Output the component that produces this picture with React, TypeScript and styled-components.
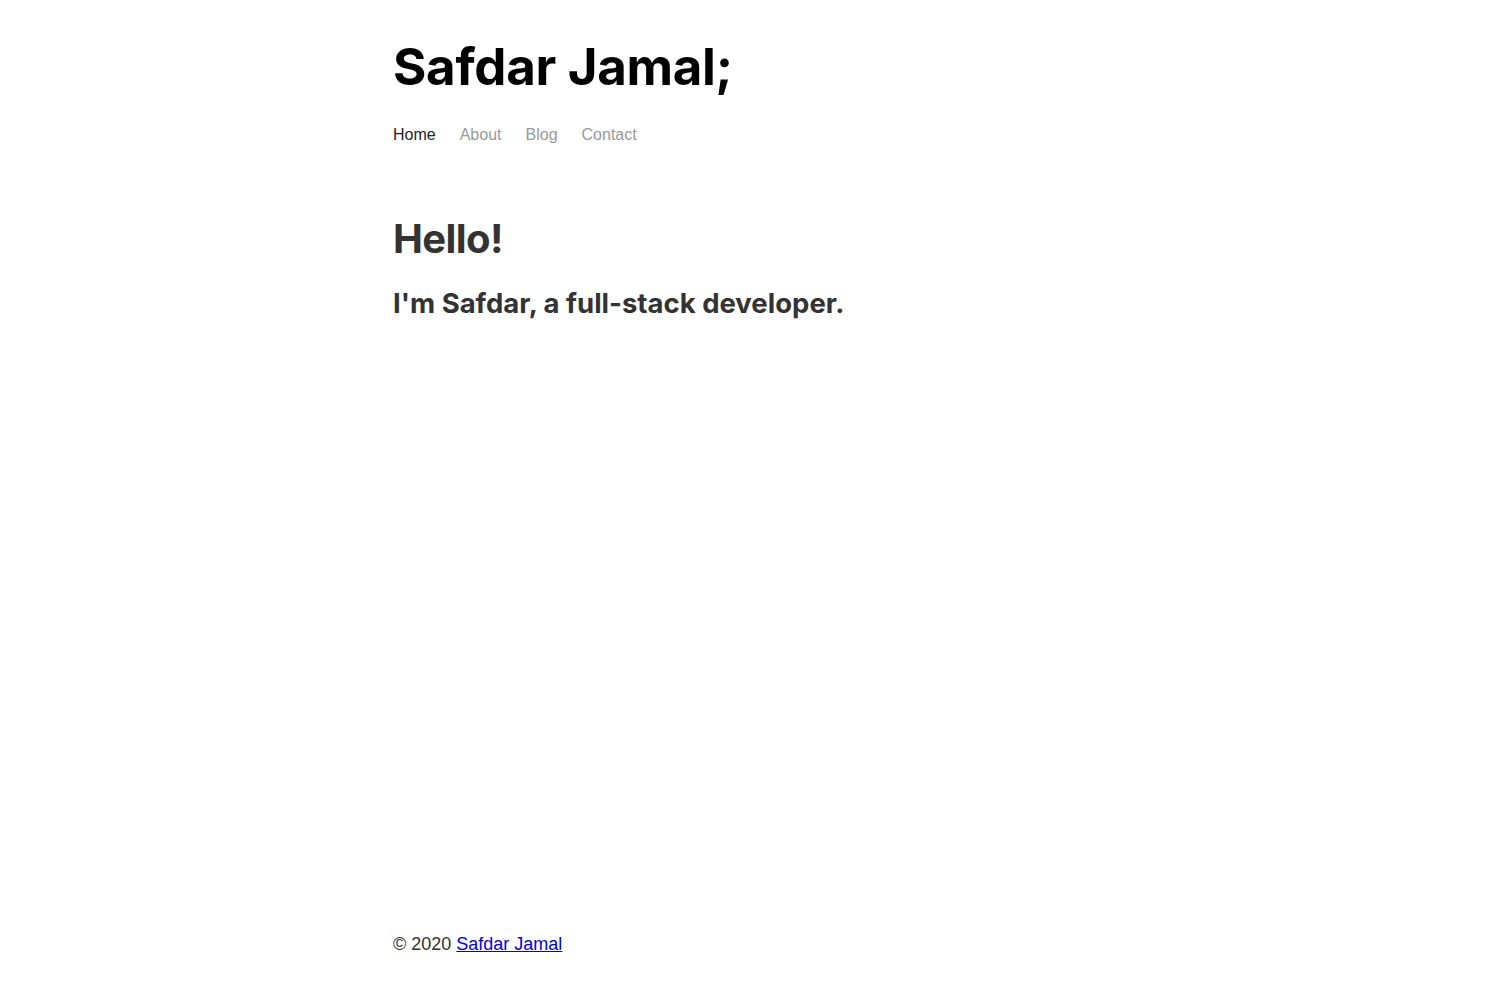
import React from "react";
import styled, { createGlobalStyle } from "styled-components";

const GlobalStyle = createGlobalStyle`
    html, body {
        margin: 0;
        padding: 0;
        background: #fff;
    }
    body {
        font-family: "Liberation Sans", Arial, sans-serif;
        color: #333;
    }
`;

const Page = styled.div`
    display: flex;
    flex-direction: column;
    min-height: 100vh;
    width: 714px;
    margin: 0 auto;
`;

const Header = styled.header`
    padding-top: 37px;
`;

const Title = styled.h1`
    margin: 0;
    font-family: Inter, "Noto Sans", sans-serif;
    font-size: 51px;
    font-weight: 700;
    line-height: 60px;
    color: #000;
    letter-spacing: -0.3px;
`;

const Nav = styled.nav`
    display: flex;
    gap: 24px;
    margin-top: 28px;
`;

const NavLink = styled.a<{ $active?: boolean }>`
    font-size: 16px;
    line-height: 20px;
    text-decoration: none;
    color: ${(p) => (p.$active ? "#222" : "#999")};
    cursor: pointer;
`;

const Main = styled.main`
    flex: 1;
    padding-top: 70px;
`;

const Hello = styled.h2`
    margin: 0;
    font-family: Inter, "Noto Sans", sans-serif;
    font-size: 40px;
    font-weight: 700;
    line-height: 48px;
    letter-spacing: -0.6px;
    color: #333;
`;

const Intro = styled.h3`
    margin: 23px 0 0;
    font-family: Inter, "Noto Sans", sans-serif;
    font-size: 27.5px;
    font-weight: 700;
    line-height: 34px;
    color: #333;
`;

const Footer = styled.footer`
    padding-bottom: 44px;
    font-size: 18px;
    line-height: 24px;
    color: #333;

    a {
        color: #0000ee;
    }
`;

const links = ["Home", "About", "Blog", "Contact"];

const App = () => {
    return (
        <>
            <GlobalStyle />
            <Page>
                <Header>
                    <Title>Safdar Jamal;</Title>
                    <Nav>
                        {links.map((item, index) => (
                            <NavLink key={item} $active={index === 0}>
                                {item}
                            </NavLink>
                        ))}
                    </Nav>
                </Header>
                <Main>
                    <Hello>Hello!</Hello>
                    <Intro>I'm Safdar, a full-stack developer.</Intro>
                </Main>
                <Footer>
                    © 2020 <a href="#">Safdar Jamal</a>
                </Footer>
            </Page>
        </>
    );
};

export default App;
